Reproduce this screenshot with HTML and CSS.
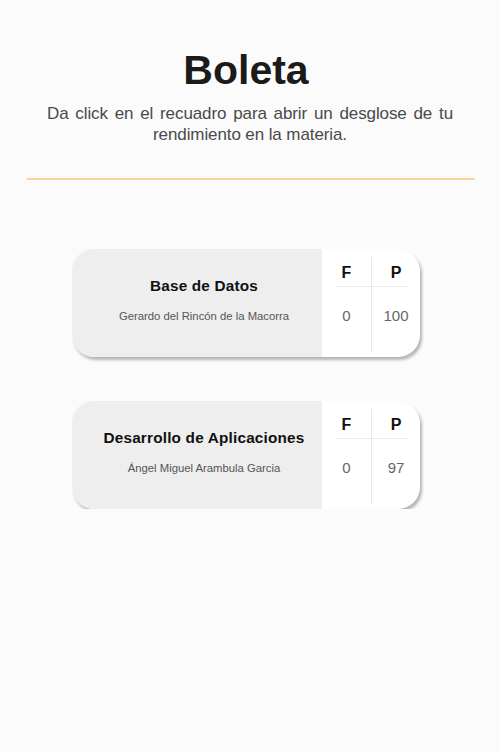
FILE: index.html
```html
<!DOCTYPE html>
<html lang="es">
<head>
<meta charset="utf-8">
<title>Boleta</title>
<link rel="stylesheet" href="styles.css">
</head>
<body>
<header class="header">
  <h1 class="title">Boleta</h1>
  <p class="intro">Da click en el recuadro para abrir un desglose de tu rendimiento en la materia.</p>
</header>
<hr class="divider">
<main class="cards">
  <div class="card">
    <div class="card-info">
      <div class="subject">Base de Datos</div>
      <div class="teacher">Gerardo del Rincón de la Macorra</div>
    </div>
    <div class="card-grades">
      <div class="col col-f">
        <div class="col-head">F</div>
        <div class="col-val">0</div>
      </div>
      <div class="col col-p">
        <div class="col-head">P</div>
        <div class="col-val">100</div>
      </div>
    </div>
  </div>
  <div class="card">
    <div class="card-info">
      <div class="subject">Desarrollo de Aplicaciones</div>
      <div class="teacher">Ángel Miguel Arambula Garcia</div>
    </div>
    <div class="card-grades">
      <div class="col col-f">
        <div class="col-head">F</div>
        <div class="col-val">0</div>
      </div>
      <div class="col col-p">
        <div class="col-head">P</div>
        <div class="col-val">97</div>
      </div>
    </div>
  </div>
</main>
</body>
</html>
```
FILE: styles.css
```css
* { box-sizing: border-box; }
html, body { margin: 0; padding: 0; }
body {
  background: #fbfbfb;
  font-family: "Liberation Sans", Arial, sans-serif;
  color: #1a1a1a;
  width: 500px;
}
.header {
  padding: 46px 47px 0 47px;
}
.title {
  margin: 0;
  padding-right: 8px;
  text-align: center;
  font-size: 41px;
  font-weight: 700;
  line-height: 48px;
  color: #1b1b1b;
}
.intro {
  margin: 9px 0 0 0;
  font-size: 17px;
  line-height: 21px;
  color: #4a4a4a;
  text-align: justify;
  text-align-last: center;
  font-weight: 400;
  letter-spacing: -0.1px;
}
.divider {
  margin: 33px 25px 0 27px;
  border: 0;
  height: 2px;
  background: #fdd09c;
}
.cards {
  padding: 69px 80px 0 72px;
  display: flex;
  flex-direction: column;
  gap: 44px;
}
.card {
  display: flex;
  height: 108px;
  border-radius: 22px;
  background: #ffffff;
  overflow: hidden;
  box-shadow: 2px 3px 3px rgba(0,0,0,0.28);
}
.card-info {
  width: 250px;
  background: #eeeeee;
  display: flex;
  flex-direction: column;
  align-items: center;
  padding: 28px 0 0 14px;
}
.subject {
  font-size: 15.3px;
  font-weight: 700;
  color: #111;
  line-height: 18px;
  letter-spacing: 0.2px;
  white-space: nowrap;
}
.teacher {
  margin-top: 14px;
  font-size: 11.3px;
  color: #555;
  line-height: 14px;
  white-space: nowrap;
}
.card-grades {
  flex: 1;
  display: flex;
  padding: 8px 0 5px 0;
}
.col {
  display: flex;
  flex-direction: column;
  align-items: center;
}
.col-f {
  width: 50px;
  border-right: 1px solid #e8e8e8;
}
.col-p {
  width: 48px;
}
.col-head {
  width: 100%;
  height: 30px;
  padding-top: 8px;
  text-align: center;
  font-size: 16px;
  font-weight: 700;
  line-height: 16px;
  color: #111;
  background-image: linear-gradient(#ebebeb, #ebebeb);
  background-repeat: no-repeat;
}
.col-f .col-head {
  background-size: calc(100% - 14px) 1px;
  background-position: right bottom;
}
.col-p .col-head {
  background-size: calc(100% - 12px) 1px;
  background-position: left bottom;
}
.col-val {
  margin-top: 21px;
  font-size: 15px;
  line-height: 16px;
  color: #666;
}
```
